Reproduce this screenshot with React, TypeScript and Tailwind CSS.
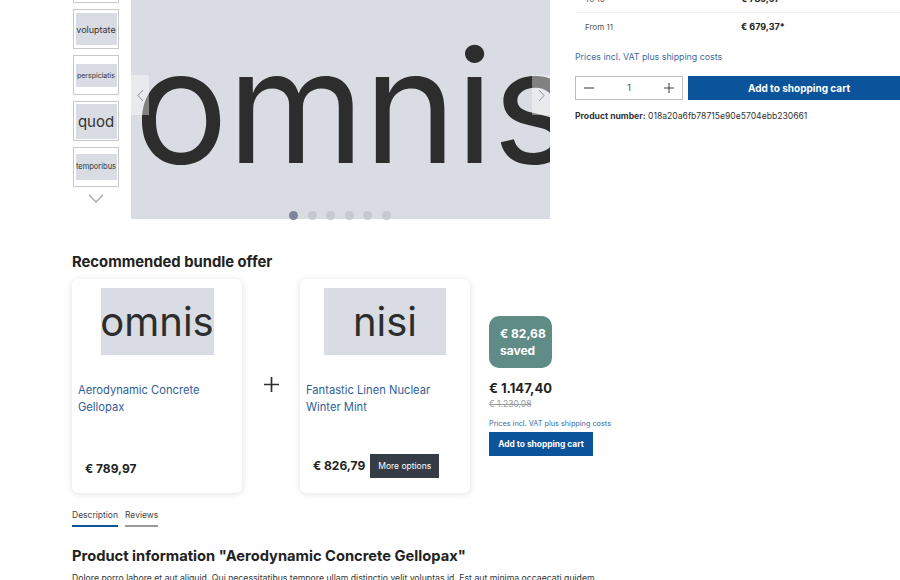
const font = { fontFamily: "Inter, 'Noto Sans', sans-serif" };

function Thumb({ label, h, size }: { label: string; h: number; size: string }) {
    return (
        <div className="w-[46px] h-[40px] border border-[#c8c8c8] bg-white flex items-center justify-center">
            <div
                className={`w-[41px] bg-[#d9dce3] flex items-center justify-center text-[#333] leading-none overflow-hidden ${size}`}
                style={{ height: h }}
            >
                {label}
            </div>
        </div>
    );
}

function BundleCard({
    img,
    imgW,
    title,
    price,
    more,
}: {
    img: string;
    imgW: string;
    title: string;
    price: string;
    more?: boolean;
}) {
    return (
        <div className="w-[170px] h-[214px] rounded-md bg-white shadow-[0_1px_6px_rgba(0,0,0,0.13)] flex flex-col">
            <div className="pt-[9px] flex justify-center">
                <div className={`${imgW} h-[67px] bg-[#d9dce3] flex items-center justify-center text-[40px] leading-none text-[#2d2d2d]`}>
                    {img}
                </div>
            </div>
            <div className="mt-[27px] px-[6px] text-[11.2px] leading-[17px] text-[#30609a]">{title}</div>
            <div className="mt-auto mb-[15px] pl-[13px] flex items-center gap-[5px]">
                <span className="text-[12px] font-bold text-[#222]">{price}</span>
                {more && (
                    <span className="w-[69px] h-[24px] bg-[#363c46] text-white text-[8.5px] flex items-center justify-center">
                        More options
                    </span>
                )}
            </div>
        </div>
    );
}

export default function App() {
    return (
        <div className="w-[900px] h-[580px] overflow-hidden bg-white text-[#222]" style={font}>
            {/* Gallery + buy box */}
            <div className="flex -mt-[81px] pl-[73px]">
                {/* Thumbnails */}
                <div className="w-[46px] pt-[44px] flex flex-col gap-[6px] items-center">
                    <div className="w-[46px] h-[40px] border border-[#c8c8c8] bg-white" />
                    <Thumb label="voluptate" h={32} size="text-[9px]" />
                    <Thumb label="perspiciatis" h={23} size="text-[7px]" />
                    <Thumb label="quod" h={35} size="text-[15px]" />
                    <Thumb label="temporibus" h={26} size="text-[7.5px]" />
                    <svg width="16" height="9" viewBox="0 0 16 9" className="mt-[1px]">
                        <path d="M1 1l7 7 7-7" fill="none" stroke="#9aa0a8" strokeWidth="1.2" />
                    </svg>
                </div>

                {/* Main image */}
                <div className="ml-[12px] w-[419px] h-[300px] relative">
                    <div className="w-full h-full bg-[#d9dce3] overflow-hidden pt-[109px] pl-[3px] whitespace-nowrap text-[157px] leading-none text-[#2d2d2d] tracking-[-1px]">
                        omnis
                    </div>
                    <div className="absolute left-0 top-[156px] w-[18px] h-[40px] bg-white/40 flex items-center justify-center">
                        <svg width="7" height="13" viewBox="0 0 7 13">
                            <path d="M6 1L1 6.5 6 12" fill="none" stroke="#8a8f98" strokeWidth="1" />
                        </svg>
                    </div>
                    <div className="absolute right-0 top-[156px] w-[18px] h-[40px] bg-white/40 flex items-center justify-center">
                        <svg width="7" height="13" viewBox="0 0 7 13">
                            <path d="M1 1l5 5.5L1 12" fill="none" stroke="#8a8f98" strokeWidth="1" />
                        </svg>
                    </div>
                    <div className="absolute left-[158px] bottom-[-1px] flex gap-[9.6px]">
                        <span className="w-[9px] h-[9px] rounded-full bg-[#7d8696]" />
                        <span className="w-[9px] h-[9px] rounded-full bg-[#c5c9d1]" />
                        <span className="w-[9px] h-[9px] rounded-full bg-[#c5c9d1]" />
                        <span className="w-[9px] h-[9px] rounded-full bg-[#c5c9d1]" />
                        <span className="w-[9px] h-[9px] rounded-full bg-[#c5c9d1]" />
                        <span className="w-[9px] h-[9px] rounded-full bg-[#c5c9d1]" />
                    </div>
                </div>

                {/* Buy box */}
                <div className="ml-[25px] w-[340px] shrink-0 pt-[67px]">
                    <div className="flex items-center h-[27px] border-b border-[#eeeeee] text-[8px]">
                        <span className="w-[166px] pl-[10px] text-[#555]">To 10</span>
                        <span className="font-bold text-[9px]">€ 789,97*</span>
                    </div>
                    <div className="flex items-center h-[28px] text-[8px]">
                        <span className="w-[166px] pl-[10px] text-[#555]">From 11</span>
                        <span className="font-bold text-[9px]">€ 679,37*</span>
                    </div>
                    <div className="mt-[9px] text-[8.8px] text-[#3c6aa3]">Prices incl. VAT plus shipping costs</div>
                    <div className="mt-[13px] flex gap-[5px]">
                        <div className="w-[108px] h-[24px] border border-[#bfbfbf] flex items-center justify-between px-[8px] text-[#444]">
                            <svg width="10" height="10" viewBox="0 0 10 10">
                                <path d="M0 5h10" stroke="#444" strokeWidth="1.1" />
                            </svg>
                            <span className="text-[9px]">1</span>
                            <svg width="10" height="10" viewBox="0 0 10 10">
                                <path d="M0 5h10M5 0v10" stroke="#444" strokeWidth="1.1" />
                            </svg>
                        </div>
                        <div className="w-[222px] h-[24px] bg-[#0b539b] text-white text-[10px] font-bold flex items-center justify-center">
                            Add to shopping cart
                        </div>
                    </div>
                    <div className="mt-[10px] text-[8.6px] text-[#333]">
                        <span className="font-bold">Product number:</span> 018a20a6fb78715e90e5704ebb230661
                    </div>
                </div>
            </div>

            {/* Bundle */}
            <div className="pl-[72px] mt-[34px]">
                <h2 className="text-[14.8px] font-bold text-[#222] leading-[18px]">Recommended bundle offer</h2>
                <div className="mt-[8px] flex">
                    <BundleCard img="omnis" imgW="w-[113px]" title="Aerodynamic Concrete Gellopax" price="€ 789,97" />
                    <div className="w-[58px] flex items-center justify-center pb-[3px]">
                        <svg width="15" height="15" viewBox="0 0 16 16">
                            <path d="M0 8h16M8 0v16" stroke="#2d2d2d" strokeWidth="1.8" />
                        </svg>
                    </div>
                    <BundleCard img="nisi" imgW="w-[122px]" title="Fantastic Linen Nuclear Winter Mint" price="€ 826,79" more />
                    <div className="ml-[19px] pt-[37px] flex flex-col items-start">
                        <div className="w-[63px] h-[52px] rounded-[10px] bg-[#5f8c87] text-white font-bold text-[12px] leading-[17px] pl-[11px] flex flex-col justify-center">
                            <span>€ 82,68</span>
                            <span>saved</span>
                        </div>
                        <div className="mt-[12px] text-[13px] font-bold leading-[16px]">€ 1.147,40</div>
                        <div className="text-[8.5px] text-[#999] line-through leading-[14px] mt-[1px]">€ 1.230,08</div>
                        <div className="mt-[8px] text-[7.3px] text-[#3c6aa3] leading-[10px]">Prices incl. VAT plus shipping costs</div>
                        <div className="mt-[3px] w-[104px] h-[24px] bg-[#0b539b] text-white text-[8.4px] font-bold flex items-center justify-center">
                            Add to shopping cart
                        </div>
                    </div>
                </div>

                {/* Tabs */}
                <div className="mt-[16px] flex gap-[7px] text-[8.5px] text-[#444]">
                    <span className="pb-[3px] border-b-2 border-[#0b539b]">Description</span>
                    <span className="pb-[3px] border-b-2 border-[#9a9a9a]">Reviews</span>
                </div>

                <h1 className="mt-[19px] text-[14.7px] font-bold text-[#222] leading-[20px]">
                    Product information "Aerodynamic Concrete Gellopax"
                </h1>
                <p className="mt-[6px] text-[8.7px] text-[#333]">
                    Dolore porro labore et aut aliquid. Qui necessitatibus tempore ullam distinctio velit voluptas id. Est aut minima occaecati quidem.
                </p>
            </div>
        </div>
    );
}
